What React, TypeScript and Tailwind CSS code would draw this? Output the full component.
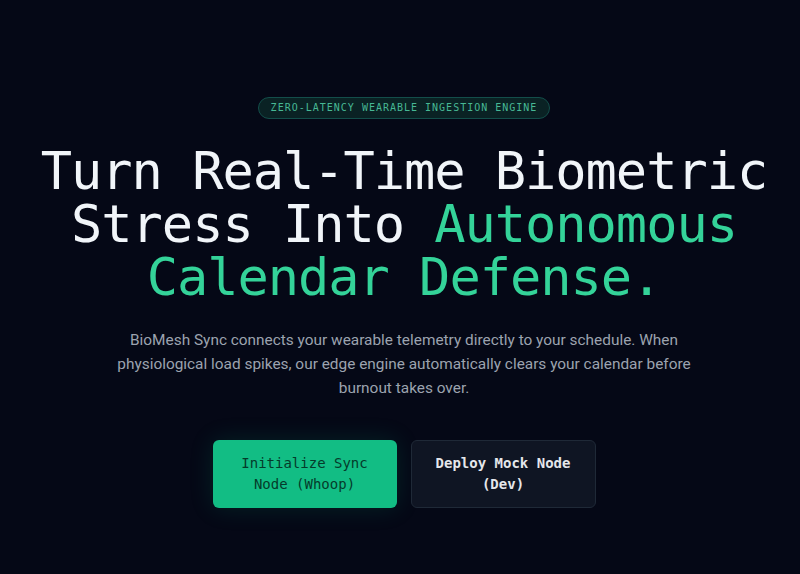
export default function App() {
  return (
    <div className="min-h-screen w-full bg-[#050816] flex flex-col items-center pt-[97px] pl-8 pr-6 font-['Roboto',sans-serif]">
      <div className="rounded-full border border-[#134e4a] bg-[#0a2224] px-3 py-[5px] font-['DejaVu_Sans_Mono',monospace] text-[10px] leading-[10px] tracking-widest text-[#47b894] uppercase">
        Zero-Latency Wearable Ingestion Engine
      </div>

      <h1 className="mt-[26px] text-center font-['DejaVu_Sans_Mono',monospace] text-[52px] leading-[53px] tracking-[-0.02em] text-[#f1f5f9]">
        Turn Real-Time Biometric
        <br />
        Stress Into <span className="text-[#34d399]">Autonomous</span>
        <br />
        <span className="text-[#34d399]">Calendar Defense.</span>
      </h1>

      <p className="mt-6 max-w-[590px] text-center text-[15.4px] leading-6 text-[#9ca3af]">
        BioMesh Sync connects your wearable telemetry directly to your schedule. When physiological load spikes, our edge
        engine automatically clears your calendar before burnout takes over.
      </p>

      <div className="mt-10 flex gap-[14px] font-['DejaVu_Sans_Mono',monospace] text-sm leading-[21px]">
        <button className="w-[184px] rounded-md bg-[#12bd84] px-6 py-[13px] text-[#053b2b] shadow-[0_0_24px_rgba(16,185,129,0.15)]">
          Initialize Sync Node (Whoop)
        </button>
        <button className="w-[185px] rounded-md border border-[#1f2937] bg-[#0f1523] px-5 py-3 font-bold text-[#e5e7eb]">
          Deploy Mock Node (Dev)
        </button>
      </div>
    </div>
  );
}
